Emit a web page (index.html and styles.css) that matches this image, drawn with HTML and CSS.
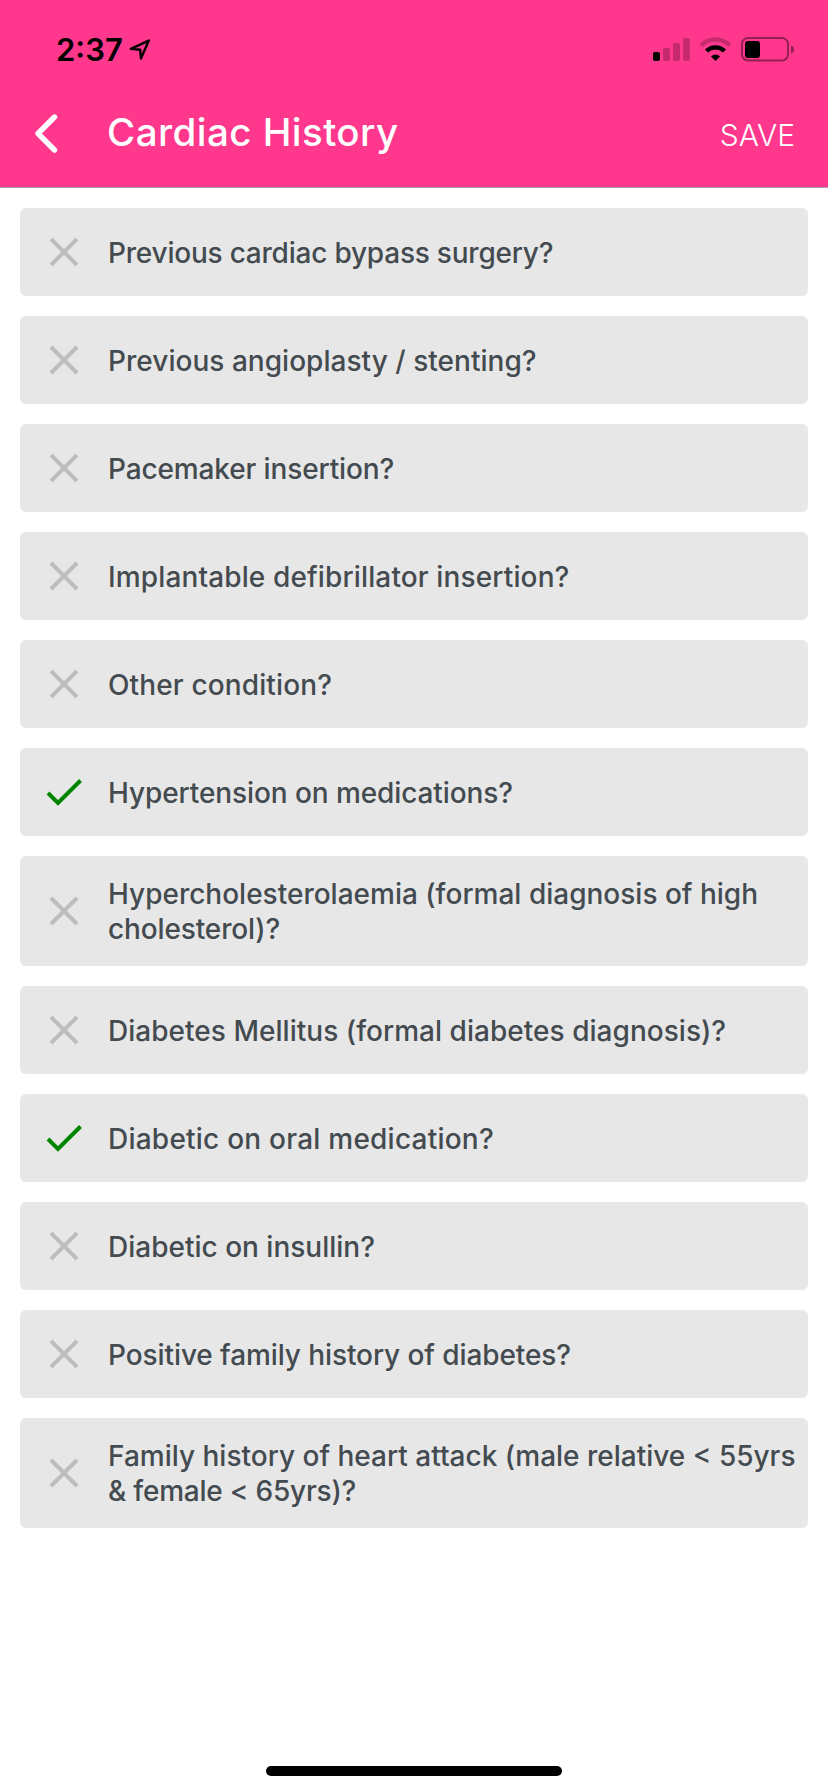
FILE: index.html
```html
<!DOCTYPE html>
<html lang="en">
<head>
<meta charset="utf-8">
<title>Cardiac History</title>
<link rel="stylesheet" href="styles.css">
</head>
<body>
<svg class="defs" width="0" height="0">
  <symbol id="cross" viewBox="0 0 36 36"><path d="M5 5 31 31M31 5 5 31" fill="none" stroke="#bdbdbd" stroke-width="4"/></symbol>
  <symbol id="check" viewBox="0 0 36 36"><path d="M2 19 12 29 34.500 6.500" fill="none" stroke="#008500" stroke-width="4"/></symbol>
</svg>
<header class="header">
  <div class="status">
    <span class="time">2:37</span>
    <svg class="location" width="22" height="22" viewBox="0 0 22 22"><path d="M1.8 9.800 19.800 1.600 12 19.600 11.200 10.800Z" fill="none" stroke="#000" stroke-width="2.400" stroke-linejoin="round"/></svg>
    <svg class="indicators" width="144" height="28" viewBox="0 0 144 28">
      <rect x="1" y="16" width="7" height="9" rx="2"/>
      <g opacity=".22"><rect x="11" y="12" width="7" height="13" rx="2"/><rect x="21" y="7" width="7" height="18" rx="2"/><rect x="31" y="2" width="7" height="23" rx="2"/></g>
      <path d="M49 9.500a20.500 20.500 0 0 1 29 0" fill="none" stroke="#000" stroke-opacity=".22" stroke-width="4.400"/>
      <path d="M54.500 15a13 13 0 0 1 18 0" fill="none" stroke="#000" stroke-width="4.400"/>
      <path d="M59 20.500q4.500-4 9 0L63.500 25Z"/>
      <rect x="90" y="2" width="46" height="22.500" rx="6" fill="none" stroke="#000" stroke-opacity=".42" stroke-width="2"/>
      <rect x="93" y="5" width="15" height="17" rx="3"/>
      <path d="M139 9.500q3 1 3 4t-3 4Z" opacity=".42"/>
    </svg>
  </div>
  <div class="nav">
    <svg class="back" width="28" height="42" viewBox="0 0 28 42"><path d="M22.500 4 6 20.500 22.500 37" fill="none" stroke="#fff" stroke-width="5.400" stroke-linecap="round" stroke-linejoin="round"/></svg>
    <div class="nav-text">
      <h1 class="title">Cardiac History</h1>
      <span class="save">SAVE</span>
    </div>
  </div>
</header>
<main class="list">
  <div class="item"><svg class="mark"><use href="#cross"/></svg><p class="label"><span class="tightest">Previous cardiac bypass surgery?</span></p></div>
  <div class="item"><svg class="mark"><use href="#cross"/></svg><p class="label"><span class="open">Previous angioplasty / stenting?</span></p></div>
  <div class="item"><svg class="mark"><use href="#cross"/></svg><p class="label"><span class="tight">Pacemaker insertion?</span></p></div>
  <div class="item"><svg class="mark"><use href="#cross"/></svg><p class="label"><span class="loose">Implantable defibrillator insertion?</span></p></div>
  <div class="item"><svg class="mark"><use href="#cross"/></svg><p class="label"><span class="loose">Other condition?</span></p></div>
  <div class="item"><svg class="mark"><use href="#check"/></svg><p class="label"><span class="snug">Hypertension on medications?</span></p></div>
  <div class="item item-tall"><svg class="mark"><use href="#cross"/></svg><p class="label">Hypercholesterolaemia (formal diagnosis of high<br><span class="tight">cholesterol)?</span></p></div>
  <div class="item"><svg class="mark"><use href="#cross"/></svg><p class="label"><span class="open">Diabetes Mellitus (formal diabetes diagnosis)?</span></p></div>
  <div class="item"><svg class="mark"><use href="#check"/></svg><p class="label"><span class="loosest">Diabetic on oral medication?</span></p></div>
  <div class="item"><svg class="mark"><use href="#cross"/></svg><p class="label">Diabetic on insullin?</p></div>
  <div class="item"><svg class="mark"><use href="#cross"/></svg><p class="label"><span class="snug">Positive family history of diabetes?</span></p></div>
  <div class="item item-tall"><svg class="mark"><use href="#cross"/></svg><p class="label">Family history of heart attack (male relative &lt; 55yrs<br><span class="tightest">&amp; female &lt; 65yrs)?</span></p></div>
</main>
<div class="home"></div>
</body>
</html>
```
FILE: styles.css
```css
* { box-sizing: border-box; }
body { margin: 0; width: 828px; height: 1792px; display: flex; flex-direction: column; background: #fff; font-family: Inter, "Liberation Sans", sans-serif; }
.defs { position: absolute; }
.header { height: 188px; background: #ff378d; border-bottom: 1px solid #b0a0a8; }
.status { height: 88px; display: flex; align-items: center; padding: 12px 32px 0 56px; }
.time { font-size: 31px; font-weight: 600; line-height: 38px; }
.location { margin-left: 6px; }
.indicators { margin-left: auto; }
.nav { height: 92px; display: flex; align-items: center; padding: 0 33px 0 32px; color: #fff; }
.back { margin-right: 47px; }
.nav-text { flex: 1; display: flex; align-items: baseline; justify-content: space-between; padding-bottom: 4px; }
.title { margin: 0; font-size: 38.5px; font-weight: 500; line-height: 48px; letter-spacing: 0.45px; white-space: nowrap; }
.save { font-size: 30px; font-weight: 300; }
.list { display: flex; flex-direction: column; gap: 20px; padding: 20px; }
.item { height: 88px; display: flex; align-items: center; padding-left: 26px; border-radius: 6px; background: #e7e7e7; }
.item-tall { height: 110px; }
.mark { width: 36px; height: 36px; flex: none; margin-right: 26px; }
.label { margin: 0; padding-top: 2px; font-size: 28px; font-weight: 500; line-height: 35px; color: #444b50; white-space: nowrap; }
.tightest { letter-spacing: -0.22px; }
.tight { letter-spacing: -0.13px; }
.snug { letter-spacing: -0.09px; }
.open { letter-spacing: 0.03px; }
.loose { letter-spacing: 0.13px; }
.loosest { letter-spacing: 0.23px; }
.home { width: 296px; height: 10px; margin: auto auto 16px; border-radius: 5px; background: #000; }
```
